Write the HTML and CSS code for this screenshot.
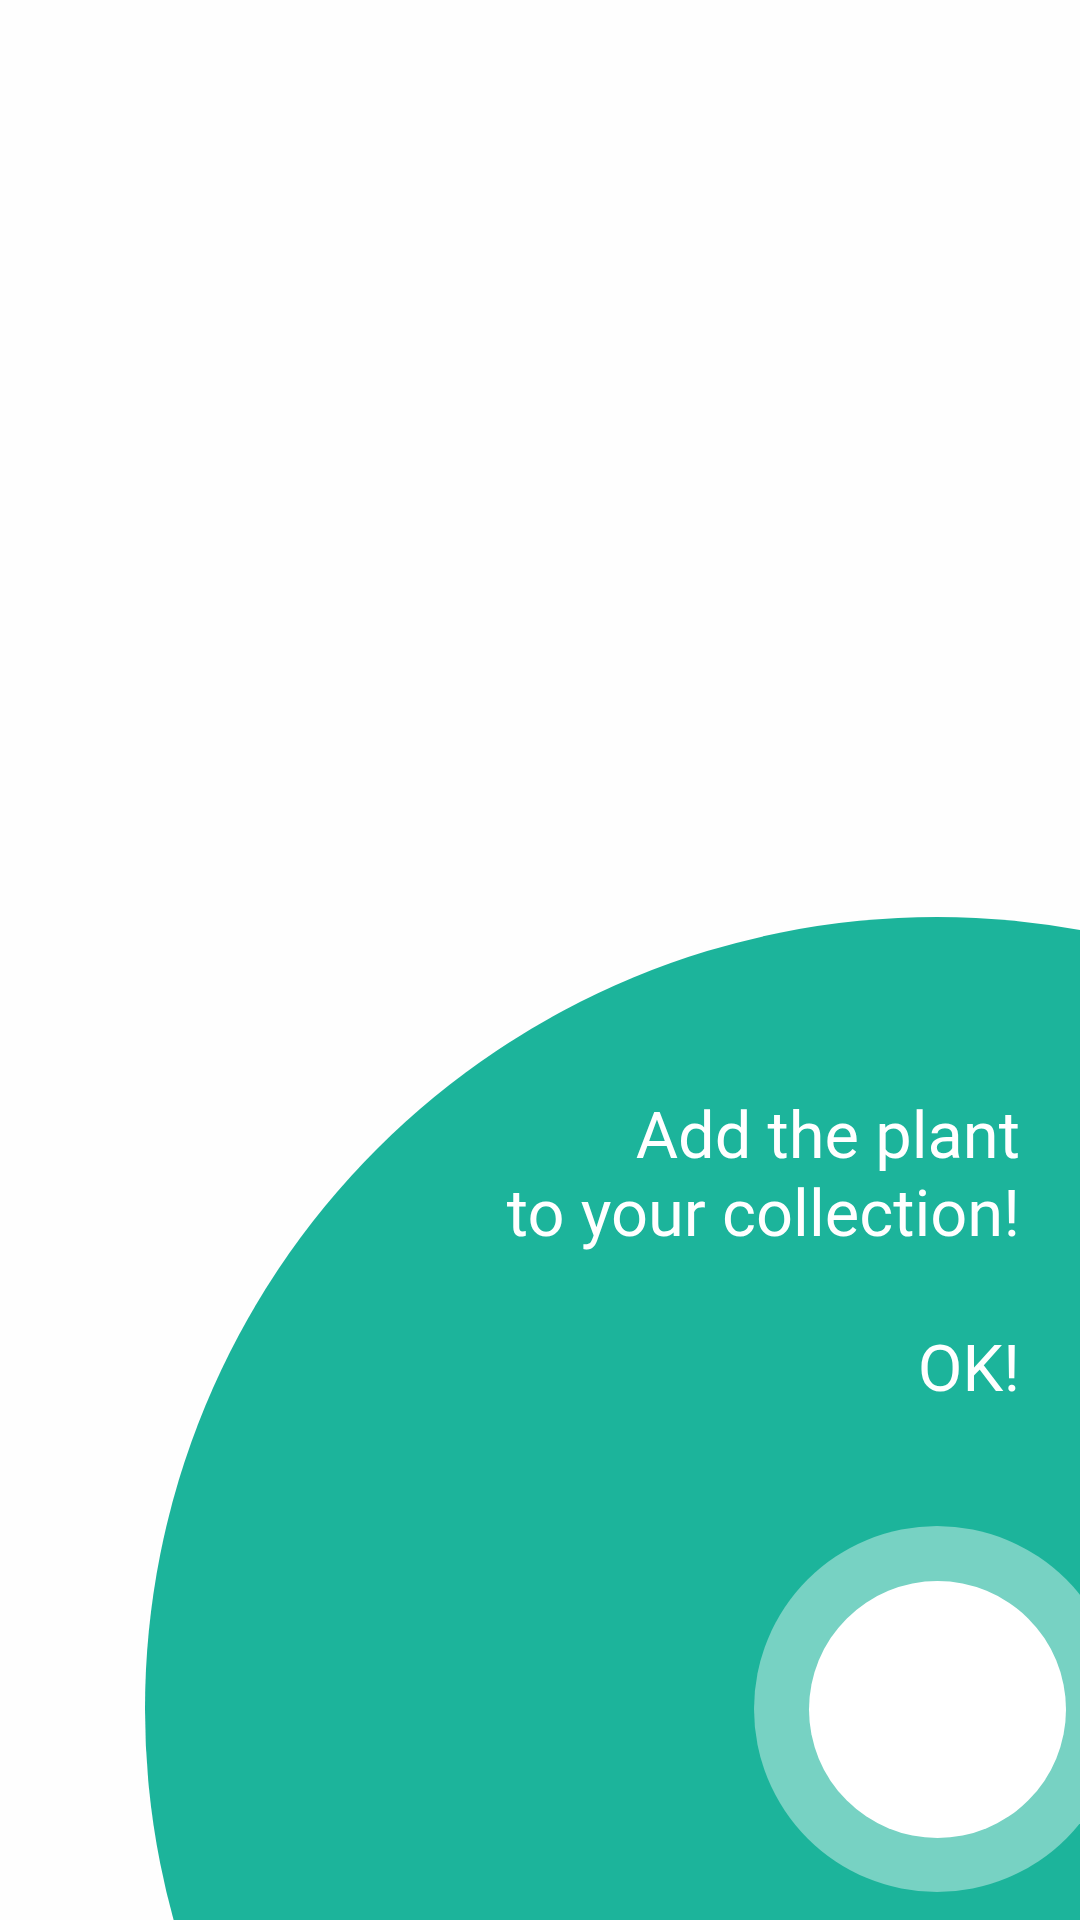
FILE: index.html
```html
<!DOCTYPE html>
<html lang="en">
<head>
<meta charset="utf-8">
<title>Add the plant</title>
<link rel="stylesheet" href="styles.css">
</head>
<body>
<div class="screen"></div>
<div class="overlay">
  <div class="outer-circle"></div>
  <div class="target-ring"></div>
  <div class="target"></div>
  <div class="tip">
    <div class="tip-title">Add the plant<br>to your collection!</div>
    <div class="tip-desc">OK!</div>
  </div>
</div>
</body>
</html>
```
FILE: styles.css
```css
html, body {
  margin: 0;
  padding: 0;
  width: 1080px;
  height: 1920px;
  overflow: hidden;
  background: #fefefe;
  font-family: Roboto, "Liberation Sans", sans-serif;
}

.screen {
  width: 1080px;
  height: 1920px;
}

.overlay {
  position: absolute;
  left: 0;
  top: 0;
  width: 1080px;
  height: 1920px;
  overflow: hidden;
}

.outer-circle {
  position: absolute;
  left: 145px;
  top: 917px;
  width: 1584px;
  height: 1584px;
  border-radius: 50%;
  background: #1cb49b;
}

.target-ring {
  position: absolute;
  left: 754px;
  top: 1526px;
  width: 366px;
  height: 366px;
  border-radius: 50%;
  background: #77d2c3;
}

.target {
  position: absolute;
  left: 808.5px;
  top: 1580.5px;
  width: 257px;
  height: 257px;
  border-radius: 50%;
  background: #ffffff;
}

.tip {
  position: absolute;
  top: 1098px;
  right: 60px;
  display: flex;
  flex-direction: column;
  align-items: flex-end;
  text-align: right;
  color: #ffffff;
  font-size: 65px;
  font-weight: 400;
  line-height: 77.6px;
}

.tip-desc {
  margin-top: 77.6px;
}
```
